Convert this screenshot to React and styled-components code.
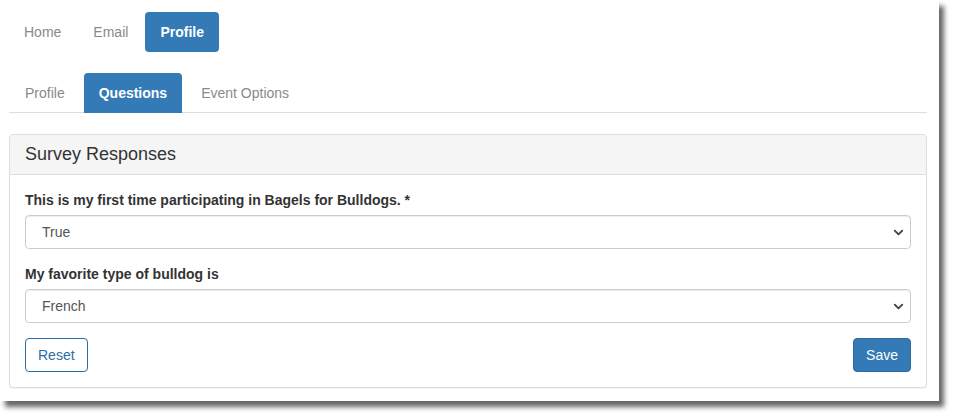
import styled, { createGlobalStyle } from "styled-components";
import { ChevronDown } from "lucide-react";

const GlobalStyle = createGlobalStyle`
  body {
    margin: 0;
    background: #fff;
    font-family: "Liberation Sans", Arial, sans-serif;
    font-size: 14px;
    color: #333;
  }
`;

const topLinks = ["Home", "Email", "Profile"];
const tabs = ["Profile", "Questions", "Event Options"];

const questions = [
  {
    label: "This is my first time participating in Bagels for Bulldogs.",
    required: true,
    options: ["True", "False"],
  },
  {
    label: "My favorite type of bulldog is",
    options: ["French", "English", "American"],
  },
];

const App = () => {
  return (
    <>
      <GlobalStyle />
      <Page>
        <Window>
          <Pills>
            {topLinks.map((link) => (
              <Pill key={link} active={link === "Profile"}>
                {link}
              </Pill>
            ))}
          </Pills>
          <Tabs>
            {tabs.map((tab) => (
              <Tab key={tab} active={tab === "Questions"}>
                {tab}
              </Tab>
            ))}
          </Tabs>
          <Panel>
            <PanelHeading>Survey Responses</PanelHeading>
            <PanelBody>
              {questions.map((q) => (
                <FormGroup key={q.label}>
                  <Label>
                    {q.label}
                    {q.required && " *"}
                  </Label>
                  <SelectWrap>
                    <Select defaultValue={q.options[0]}>
                      {q.options.map((o) => (
                        <option key={o}>{o}</option>
                      ))}
                    </Select>
                    <Chevron size={15} strokeWidth={3} />
                  </SelectWrap>
                </FormGroup>
              ))}
              <Actions>
                <Button>Reset</Button>
                <Button primary>Save</Button>
              </Actions>
            </PanelBody>
          </Panel>
        </Window>
      </Page>
    </>
  );
};

export default App;

const Page = styled.div`
  width: 954px;
  height: 417px;
  overflow: hidden;
`;

const Window = styled.div`
  width: 939px;
  height: 401px;
  box-sizing: border-box;
  padding: 12px 12px 0 9px;
  background: #fff;
  box-shadow: 5px 6px 5px rgba(0, 0, 0, 0.6);
`;

const Pills = styled.div`
  display: flex;
  gap: 2px;
`;

const Pill = styled.div`
  padding: 10px 15px;
  line-height: 20px;
  border-radius: 4px;
  color: ${(p) => (p.active ? "#fff" : "#8a8a8a")};
  background: ${(p) => (p.active ? "#337ab7" : "transparent")};
  font-weight: ${(p) => (p.active ? "bold" : "normal")};
`;

const Tabs = styled.div`
  display: flex;
  gap: 4px;
  margin-top: 21px;
  padding-left: 1px;
  border-bottom: 1px solid #ddd;
  width: 917px;
`;

const Tab = styled.div`
  height: 40px;
  box-sizing: border-box;
  padding: 9px 14px 10px;
  line-height: 20px;
  border-radius: 4px 4px 0 0;
  margin-bottom: -1px;
  color: ${(p) => (p.active ? "#fff" : "#8a8a8a")};
  background: ${(p) => (p.active ? "#337ab7" : "transparent")};
  font-weight: ${(p) => (p.active ? "bold" : "normal")};
  border: 1px solid ${(p) => (p.active ? "#337ab7" : "transparent")};
  border-bottom: none;
`;

const Panel = styled.div`
  margin-top: 21px;
  border: 1px solid #ddd;
  border-radius: 4px;
  background: #fff;
  box-shadow: 0 1px 1px rgba(0, 0, 0, 0.05);
`;

const PanelHeading = styled.div`
  padding: 10px 15px;
  background: #f5f5f5;
  border-bottom: 1px solid #ddd;
  border-radius: 3px 3px 0 0;
  font-size: 18px;
  line-height: 19px;
  color: #333;
`;

const PanelBody = styled.div`
  padding: 15px;
`;

const FormGroup = styled.div`
  margin-bottom: 15px;
`;

const Label = styled.label`
  display: block;
  font-weight: bold;
  line-height: 20px;
  margin-bottom: 5px;
  color: #333;
`;

const SelectWrap = styled.div`
  position: relative;
`;

const Select = styled.select`
  display: block;
  width: 100%;
  height: 34px;
  padding: 6px 16px;
  font-family: inherit;
  font-size: 14px;
  color: #555;
  background: #fff;
  border: 1px solid #ccc;
  border-radius: 4px;
  box-shadow: inset 0 1px 1px rgba(0, 0, 0, 0.075);
  appearance: none;
  -webkit-appearance: none;
  outline: none;
`;

const Chevron = styled(ChevronDown)`
  position: absolute;
  right: 5px;
  top: 10px;
  color: #444;
  pointer-events: none;
`;

const Actions = styled.div`
  display: flex;
  justify-content: space-between;
`;

const Button = styled.button`
  height: 34px;
  padding: 6px 12px;
  font-family: inherit;
  font-size: 14px;
  line-height: 20px;
  border-radius: 4px;
  border: 1px solid #2e6da4;
  color: ${(p) => (p.primary ? "#fff" : "#2e6da4")};
  background: ${(p) => (p.primary ? "#337ab7" : "#fff")};
  cursor: pointer;
`;
